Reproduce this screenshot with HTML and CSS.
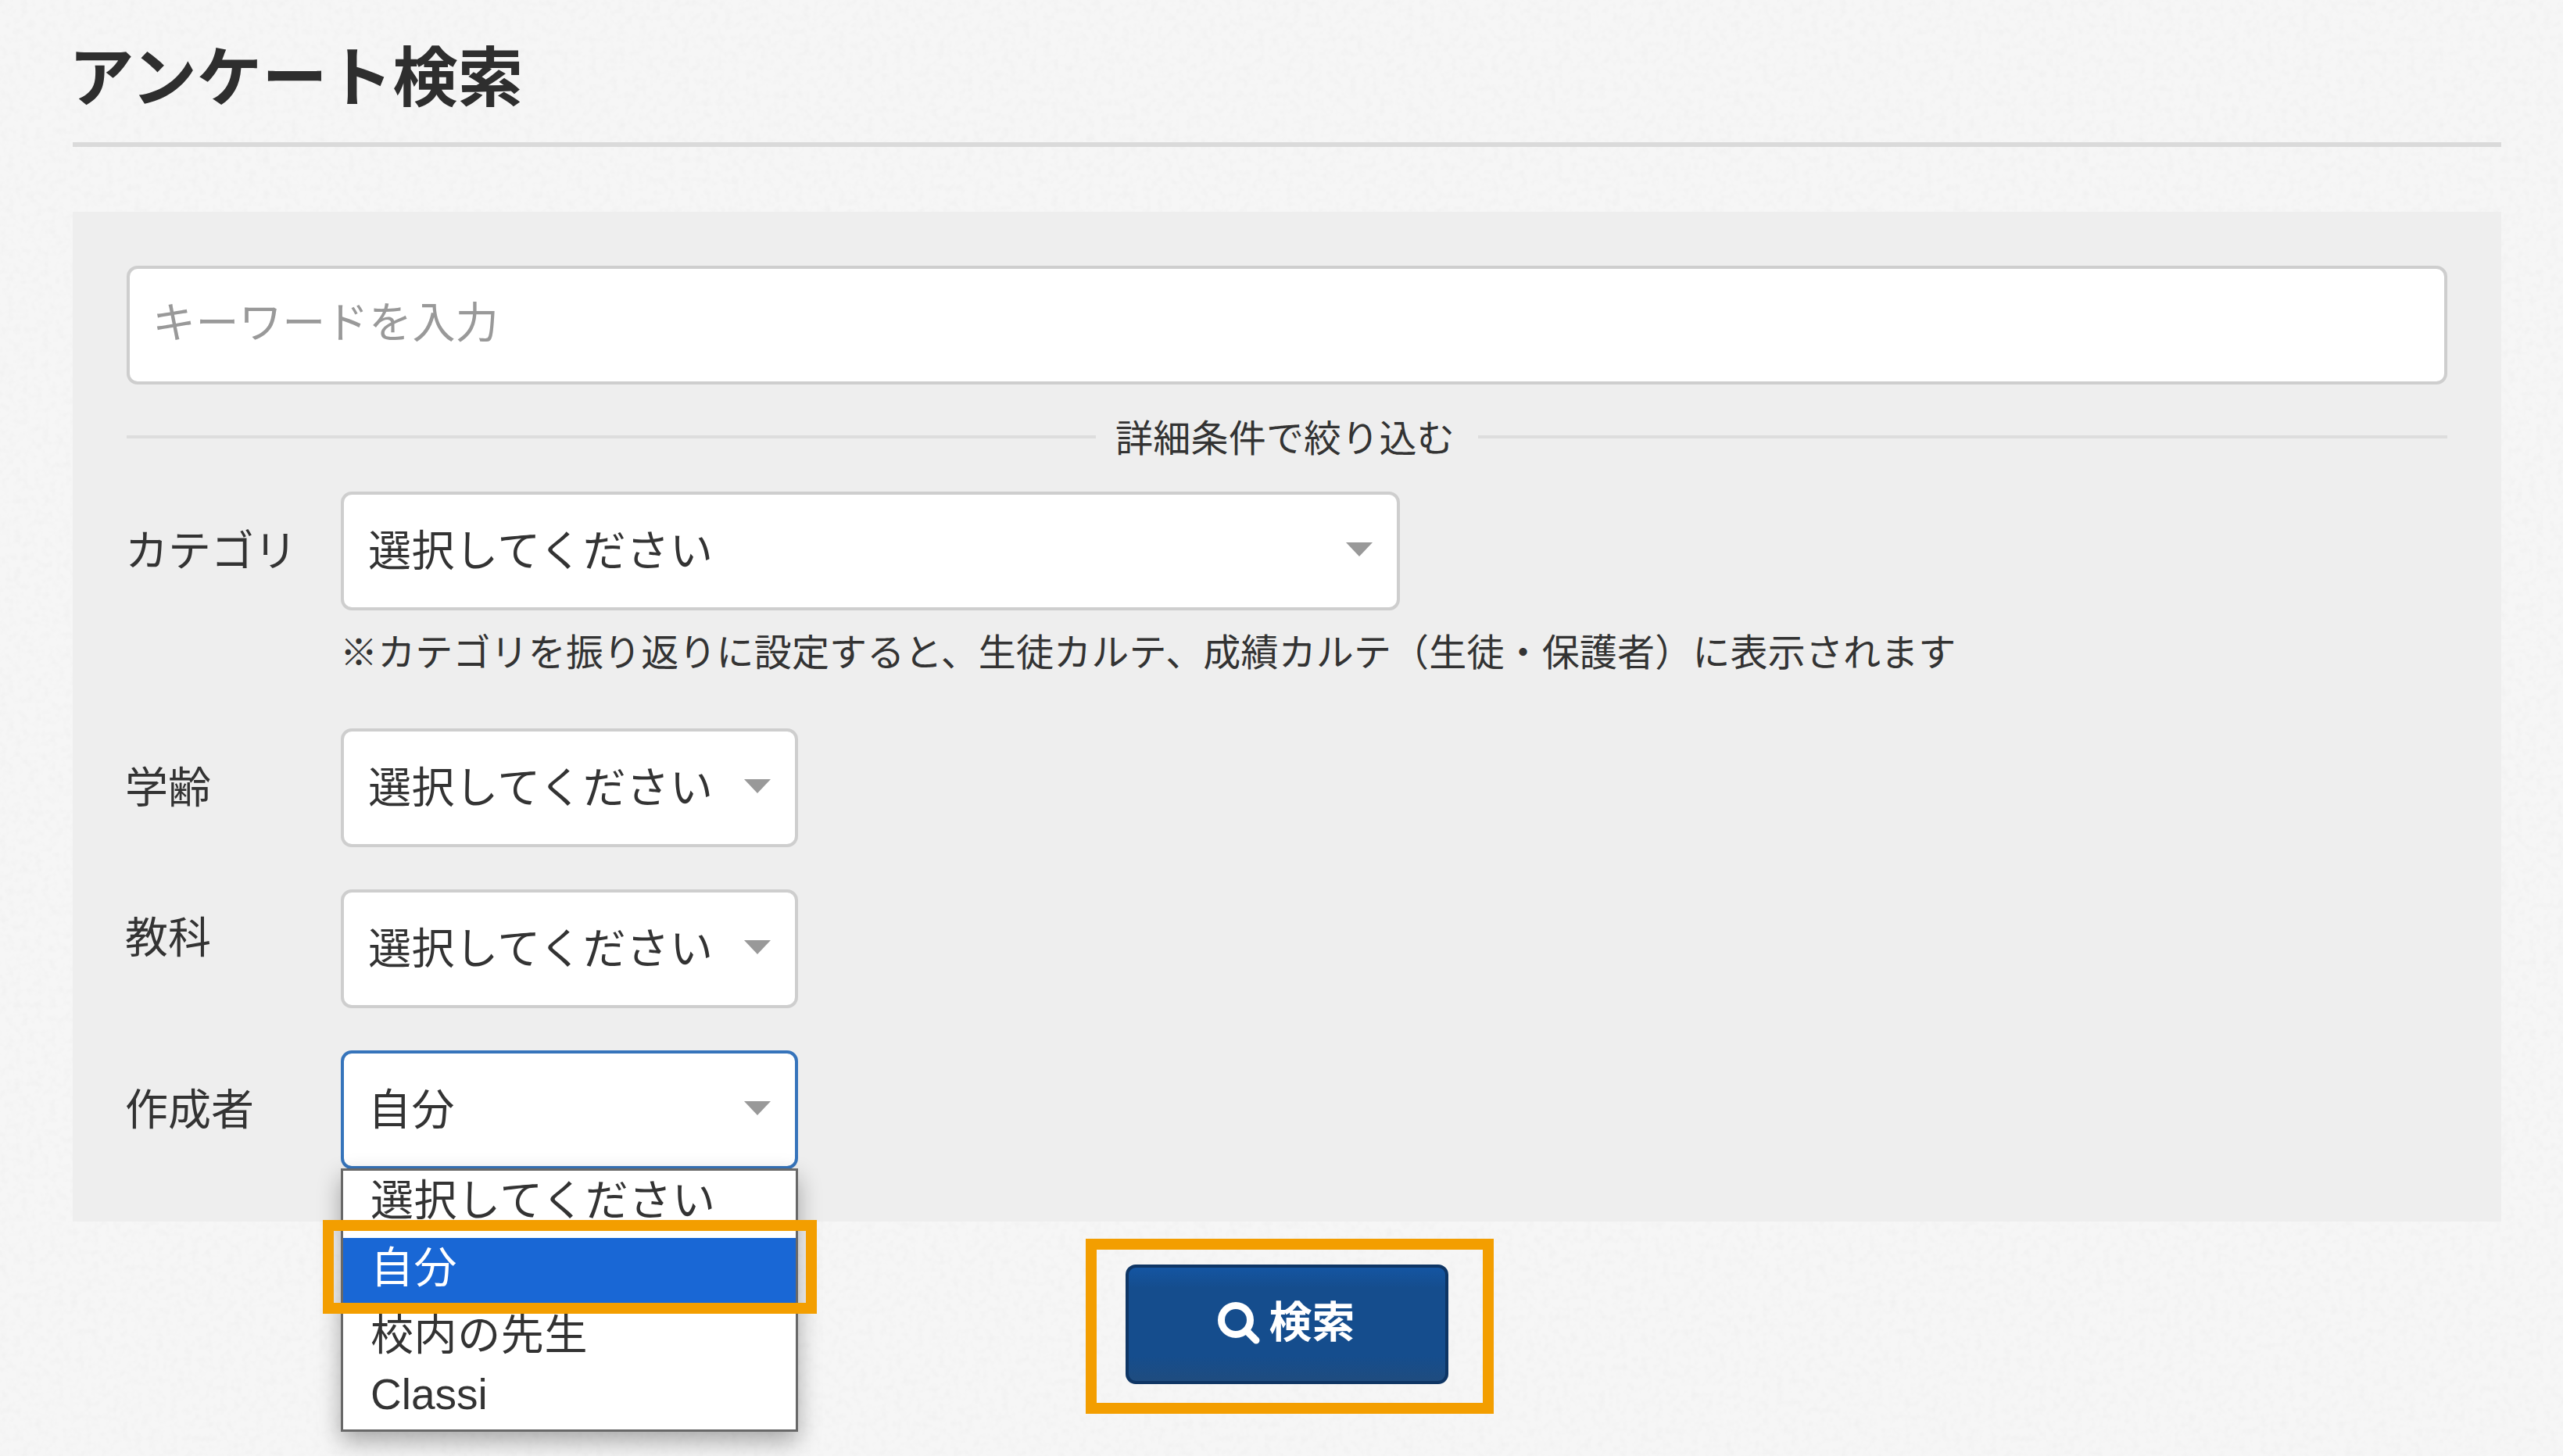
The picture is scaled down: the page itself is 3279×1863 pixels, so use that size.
FILE: index.html
```html
<!DOCTYPE html>
<html lang="ja">
<head>
<meta charset="utf-8">
<title>アンケート検索</title>
<link rel="stylesheet" href="styles.css">
</head>
<body>
<svg class="paper" aria-hidden="true">
  <filter id="grain" x="0" y="0" width="100%" height="100%">
    <feTurbulence type="fractalNoise" baseFrequency="0.11" numOctaves="2" seed="4"/>
    <feColorMatrix values="0 0 0 0 0.55  0 0 0 0 0.55  0 0 0 0 0.55  0.2 0 0 0 -0.085"/>
  </filter>
  <rect width="100%" height="100%" filter="url(#grain)"/>
</svg>
<main class="page">
  <h1 class="page-title">アンケート検索</h1>
  <form class="panel">
    <input class="keyword" type="text" placeholder="キーワードを入力">
    <div class="divider"><span>詳細条件で絞り込む</span></div>

    <div class="row row-category">
      <span class="label">カテゴリ</span>
      <div class="field">
        <div class="select select-wide">
          <span>選択してください</span>
          <svg class="caret" viewBox="0 0 34 18"><path d="M0 0h34L17 18z"/></svg>
        </div>
        <p class="note">※カテゴリを振り返りに設定すると、生徒カルテ、成績カルテ（生徒・保護者）に表示されます</p>
      </div>
    </div>

    <div class="row">
      <span class="label">学齢</span>
      <div class="select">
        <span>選択してください</span>
        <svg class="caret" viewBox="0 0 34 18"><path d="M0 0h34L17 18z"/></svg>
      </div>
    </div>

    <div class="row">
      <span class="label label-raised">教科</span>
      <div class="select">
        <span>選択してください</span>
        <svg class="caret" viewBox="0 0 34 18"><path d="M0 0h34L17 18z"/></svg>
      </div>
    </div>

    <div class="row">
      <span class="label">作成者</span>
      <div class="select select-open">
        <span>自分</span>
        <svg class="caret" viewBox="0 0 34 18"><path d="M0 0h34L17 18z"/></svg>
        <ul class="menu">
          <li class="option">選択してください</li>
          <li class="option option-active">自分</li>
          <li class="option">校内の先生</li>
          <li class="option option-latin">Classi</li>
        </ul>
        <div class="highlight"></div>
      </div>
    </div>
  </form>
  <div class="actions">
    <div class="callout">
      <button class="search" type="button">
        <svg class="search-icon" viewBox="0 0 56 56"><circle cx="24" cy="24" r="18.5"/><path d="M37.500 37.500L50 50"/></svg>
        <span>検索</span>
      </button>
    </div>
  </div>
</main>
</body>
</html>
```
FILE: styles.css
```css
* {
  box-sizing: border-box;
}

html {
  height: 100%;
  overflow: hidden;
}

body {
  margin: 0;
  height: 1863px;
  overflow: hidden;
  position: relative;
  background: #f6f6f6;
  color: #333;
  font-family: "Noto Sans CJK JP", sans-serif;
  font-size: 55px;
  line-height: 66px;
}

.paper {
  position: absolute;
  inset: 0;
  width: 100%;
  height: 100%;
}

.page {
  position: relative;
  width: 3107px;
  margin-left: 93px;
}

.page-title {
  margin: 0 0 83px;
  height: 188px;
  padding-top: 43px;
  border-bottom: 6px solid #dadada;
  font-size: 83.5px;
  line-height: 100px;
  font-weight: 700;
  text-indent: -5px;
  color: #2e2e2e;
}

.panel {
  display: flex;
  flex-direction: column;
  height: 1292px;
  padding: 69px 69px 0;
  background: #eee;
}

.keyword {
  flex: none;
  width: 100%;
  height: 152px;
  padding: 0 29px 16px;
  border: 4px solid #cecece;
  border-radius: 14px;
  background: #fff;
  font: inherit;
  letter-spacing: 0.4px;
  color: #333;
}

.keyword::placeholder {
  color: #999;
  opacity: 1;
}

.divider {
  display: flex;
  align-items: center;
  gap: 25px;
  height: 70px;
  margin: 32px 0 35px;
  font-size: 48px;
  letter-spacing: 0.2px;
  white-space: nowrap;
}

.divider span {
  padding-bottom: 4px;
}

.divider::before,
.divider::after {
  content: "";
  flex: 1;
  height: 4px;
  background: #ddd;
}

.divider::after {
  margin-left: 5px;
}

.row {
  display: flex;
  align-items: flex-start;
  margin-bottom: 54px;
}

.row-category {
  height: 249px;
}

.label {
  flex: none;
  width: 274px;
  padding-top: 38px;
  text-indent: -2px;
}

.label-raised {
  padding-top: 24px;
}

.select {
  position: relative;
  display: flex;
  justify-content: space-between;
  align-items: center;
  width: 585px;
  height: 152px;
  padding: 0 31px 10px 31px;
  border: 4px solid #cecece;
  border-radius: 14px;
  background: #fff;
  letter-spacing: 0.6px;
}

.select-wide {
  width: 1355px;
}

.caret {
  width: 34px;
  height: 18px;
  margin-top: 6px;
  fill: #999;
}

.note {
  margin: 20px 0 0;
  font-size: 48px;
  line-height: 60px;
  letter-spacing: 0.16px;
  text-indent: -1px;
  white-space: nowrap;
}

.select-open {
  border-color: #3674bb;
}

.menu {
  position: absolute;
  top: 147px;
  left: -4px;
  width: 585px;
  height: 337px;
  margin: 0;
  padding: 0;
  list-style: none;
  border: 3px solid #686868;
  background: #fff;
  box-shadow: 0 12px 28px rgba(0, 0, 0, 0.32);
}

.option {
  height: 86px;
  padding-left: 35px;
}

.option-active {
  background: #1967d5;
  color: #fff;
}

.option-latin {
  height: 72px;
  font-family: "Liberation Sans", sans-serif;
  line-height: 56px;
  letter-spacing: 0;
}

.highlight {
  position: absolute;
  top: 213px;
  left: -27px;
  width: 632px;
  height: 120px;
  border: 14px solid #f39e00;
}

.actions {
  display: flex;
  justify-content: center;
  padding: 22px 0 0 7px;
}

.callout {
  width: 522px;
  height: 224px;
  padding: 19px 37px;
  border: 14px solid #f39e00;
}

.search {
  display: flex;
  justify-content: center;
  align-items: center;
  gap: 10px;
  width: 413px;
  height: 153px;
  padding: 0 2px 16px 0;
  border: 4px solid #0e3564;
  border-radius: 13px;
  background: linear-gradient(#1455a2, #154d8d 18%, #154d8d 78%, #1f4c7f);
  font: inherit;
  font-weight: 700;
  color: #fff;
}

.search-icon {
  width: 56px;
  height: 56px;
  margin-top: 12px;
  fill: none;
  stroke: #fff;
  stroke-width: 9;
  stroke-linecap: round;
}
```
